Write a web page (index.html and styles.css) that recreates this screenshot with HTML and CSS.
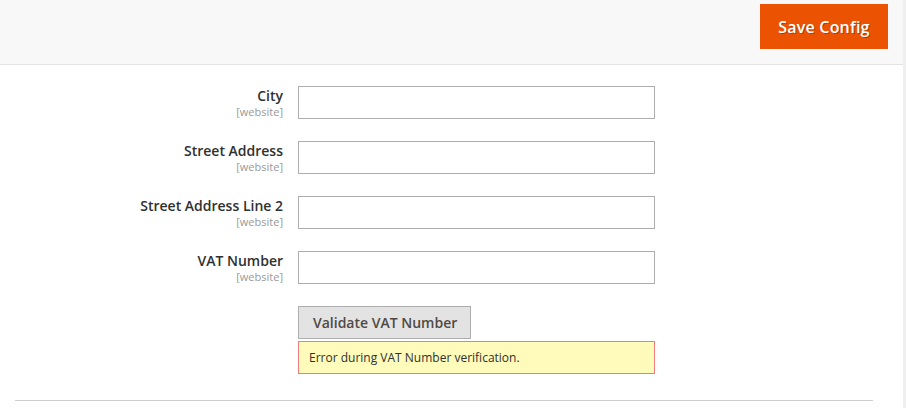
FILE: index.html
```html
<!DOCTYPE html>
<html lang="en">
<head>
<meta charset="utf-8">
<title>Config</title>
<link rel="stylesheet" href="styles.css">
</head>
<body>
<div class="page">
  <div class="main">
    <header class="page-actions">
      <button class="btn-primary" type="button">Save Config</button>
    </header>
    <section class="fieldset">
      <div class="form-grid">
        <div class="label"><span class="label-text">City</span><span class="scope">[website]</span></div>
        <div class="control"><input class="input-text" type="text"></div>

        <div class="label"><span class="label-text">Street Address</span><span class="scope">[website]</span></div>
        <div class="control"><input class="input-text" type="text"></div>

        <div class="label"><span class="label-text">Street Address Line 2</span><span class="scope">[website]</span></div>
        <div class="control"><input class="input-text" type="text"></div>

        <div class="label"><span class="label-text">VAT Number</span><span class="scope">[website]</span></div>
        <div class="control"><input class="input-text" type="text"></div>

        <div class="label"></div>
        <div class="control">
          <button class="btn-secondary" type="button">Validate VAT Number</button>
          <div class="message-error">Error during VAT Number verification.</div>
        </div>
      </div>
      <hr class="divider">
    </section>
  </div>
  <div class="edge"></div>
</div>
</body>
</html>
```
FILE: styles.css
```css
html, body {
  margin: 0;
  padding: 0;
  background: #ffffff;
}
body {
  font-family: "Open Sans", "Liberation Sans", sans-serif;
  color: #303030;
  width: 906px;
  height: 408px;
  overflow: hidden;
}
.page {
  display: flex;
  height: 408px;
}
.main {
  width: 903px;
  flex: none;
}
.edge {
  flex: 1;
  background: #efefef;
}
.page-actions {
  background: #f8f8f8;
  border-bottom: 1px solid #e3e3e3;
  display: flex;
  justify-content: flex-end;
  align-items: flex-start;
  padding: 4px 15px 0 0;
  box-sizing: border-box;
  height: 65px;
}
.btn-primary {
  width: 128px;
  height: 45px;
  background: #eb5202;
  border: 1px solid #eb5202;
  color: #ffffff;
  font-family: "Open Sans", "Liberation Sans", sans-serif;
  font-weight: 600;
  font-size: 16px;
  letter-spacing: 0.2px;
  text-shadow: 1px 1px 0 rgba(0,0,0,0.25);
  padding: 0;
  cursor: pointer;
}
.fieldset {
  padding-top: 21px;
}
.form-grid {
  display: grid;
  grid-template-columns: 283px 357px;
  column-gap: 15px;
  row-gap: 22px;
}
.label {
  display: flex;
  flex-direction: column;
  align-items: flex-end;
  text-align: right;
}
.label-text {
  font-size: 14px;
  font-weight: 600;
  line-height: 19px;
  color: #303030;
}
.scope {
  font-size: 11px;
  line-height: 13px;
  color: #999999;
}
.control {
  display: flex;
  flex-direction: column;
  align-items: flex-start;
}
.input-text {
  width: 357px;
  height: 33px;
  box-sizing: border-box;
  border: 1px solid #adadad;
  background: #ffffff;
  margin: 0;
  padding: 0 10px;
  font-family: inherit;
  font-size: 14px;
}
.btn-secondary {
  height: 33px;
  box-sizing: border-box;
  background: #e3e3e3;
  border: 1px solid #adadad;
  color: #514943;
  font-family: "Open Sans", "Liberation Sans", sans-serif;
  font-weight: 600;
  font-size: 14px;
  padding: 0 13px 0 14px;
  margin: 0;
}
.message-error {
  margin-top: 2px;
  width: 357px;
  height: 33px;
  box-sizing: border-box;
  background: #fffbbb;
  border: 1px solid #ee7d7d;
  font-size: 12px;
  color: #303030;
  padding: 0 10px;
  display: flex;
  align-items: center;
}
.divider {
  margin: 26px 30px 0 15px;
  border: 0;
  border-top: 1px solid #cccccc;
  height: 0;
}
```
